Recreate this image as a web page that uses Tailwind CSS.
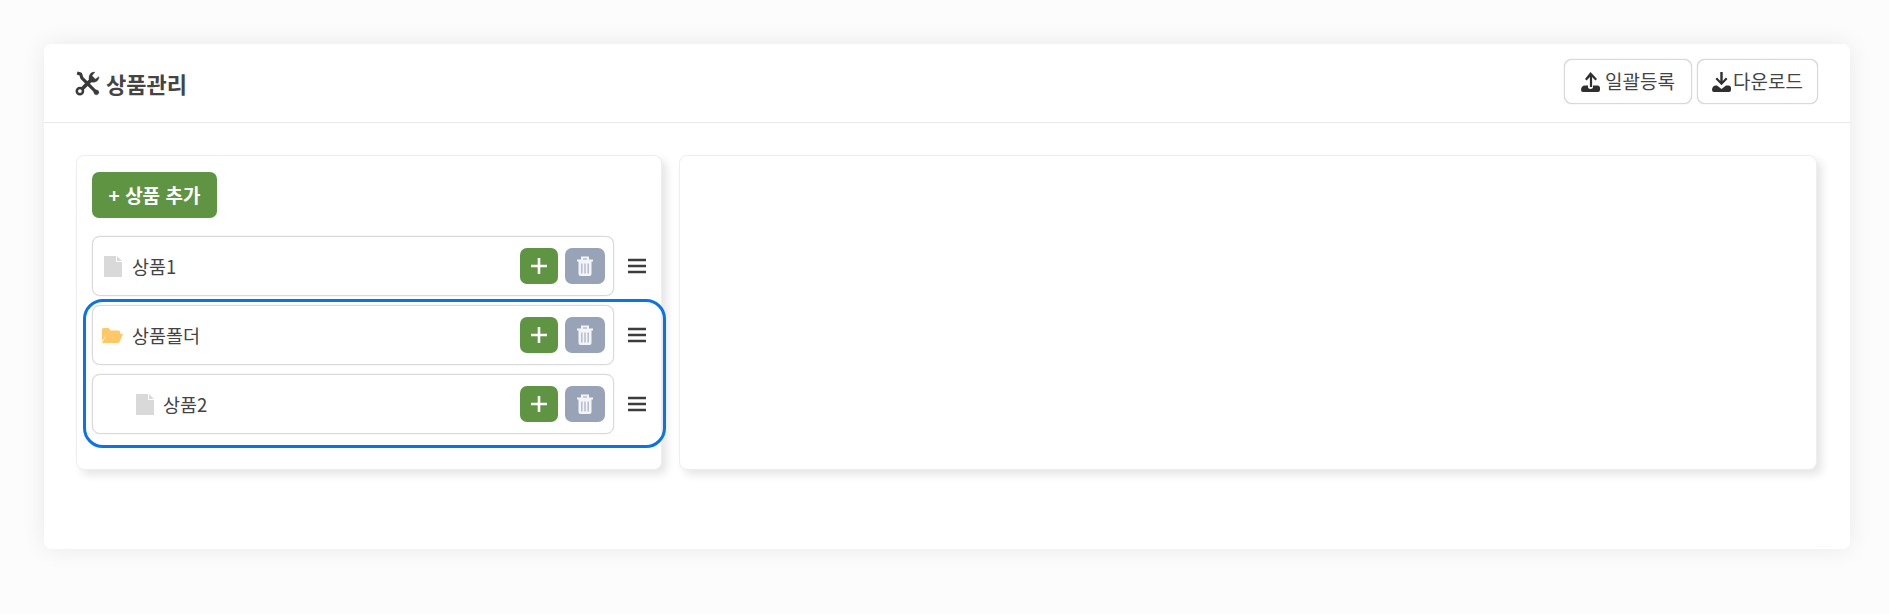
<!DOCTYPE html>
<html lang="ko">
  <head>
    <meta charset="UTF-8" />
    <title>상품관리</title>
    <script src="https://cdn.jsdelivr.net/npm/@tailwindcss/browser@4"></script>
  </head>
  <body class="bg-[#fcfcfc] h-screen pl-[44px] pr-[39px] pt-[44px] font-['Noto_Sans_CJK_KR','Noto_Sans',sans-serif] text-[#444]">
    <div class="bg-white h-[505px] rounded-[7px] shadow-[0_0_24px_rgba(0,0,0,0.08)]">
      <!-- header -->
      <header class="flex items-center justify-between h-[79px] pl-[31px] pr-[32px] border-b border-[#e9e9e9]">
        <div class="flex items-center gap-[6px]">
          <svg class="w-[25px] h-[25px]" viewBox="0 0 24 24" fill="none" stroke="#3a3a3a">
            <path d="M2 2l3.500 1 1 3.500L20.500 20.500" stroke-width="3" stroke-linejoin="round"/>
            <path d="M6.500 17.500L16 8" stroke-width="3.600"/>
            <path d="M23 5.500a5.300 5.300 0 0 1-8 4.500 5.300 5.300 0 0 1 4-9L16.300 4.500l3.200 3.300z" fill="#3a3a3a" stroke-width="0.500" stroke-linejoin="round"/>
            <circle cx="4.700" cy="19.300" r="3" fill="#fff" stroke-width="2.400"/>
            <circle cx="20.500" cy="20.500" r="2.300" fill="#3a3a3a" stroke-width="0.500"/>
          </svg>
          <h1 class="text-[22px] font-bold leading-none">상품관리</h1>
        </div>
        <div class="flex gap-[5px] mb-[3px]">
          <button class="flex items-center justify-center gap-[5px] w-[128px] h-[45px] bg-white border border-[#d9d9d9] shadow-[0_0_1px_#bbb] rounded-[8px] text-[19px]">
            <svg class="w-[19px] h-[20px]" viewBox="0 0 19 20" fill="#2f2f2f"><path d="M9.500 0l6.500 7-1.600 1.400-3.300-3.500V15H8.900V4.900L5.600 8.400 4 7z"/><path d="M0 18c0-2.500 1.500-4.500 4-4.500h3V15c0 1.300 1 2 2.500 2s2.500-.7 2.500-2v-1.500h4.500c1.500 0 2.500 1 2.500 2.500v2a2 2 0 0 1-2 2H2a2 2 0 0 1-2-2z"/></svg>
            일괄등록
          </button>
          <button class="flex items-center justify-center gap-[2px] w-[121px] h-[45px] bg-white border border-[#d9d9d9] shadow-[0_0_1px_#bbb] rounded-[8px] text-[19px]">
            <svg class="w-[19px] h-[20px]" viewBox="0 0 19 20" fill="#2f2f2f"><path d="M8.300 0h2.400v9l3.200-3.400 1.600 1.400-6 6.300-6-6.300 1.600-1.400 3.200 3.400z"/><path d="M0 18c0-2.500 1.500-4.500 4-4.500h1l4.500 3.500 4.500-3.500h2.500c1.500 0 2.500 1 2.500 2.500v2a2 2 0 0 1-2 2H2a2 2 0 0 1-2-2z"/></svg>
            다운로드
          </button>
        </div>
      </header>

      <div class="flex gap-[17px] pt-[32px] pl-[32px] pr-[33px]">
        <!-- tree -->
        <div class="w-[586px] h-[315px] p-[15px] pt-[16px] bg-white border border-[#eee] rounded-[8px] shadow-[5px_5px_8px_rgba(0,0,0,0.1)]">
          <button class="block w-[125px] h-[46px] bg-[#5f9442] text-white text-[19px] font-bold rounded-[7px]">+ 상품 추가</button>

          <div class="relative mt-[18px] flex flex-col gap-[9px]">
            <div class="flex items-center">
              <div class="flex items-center w-[522px] h-[60px] pl-[11px] pr-[8px] border border-[#d9d9d9] shadow-[0_0_1px_#bbb] rounded-[8px]">
                <svg class="w-[18px] h-[21px] mr-[10px]" viewBox="0 0 18 21" fill="#d9d9d9"><path d="M0 0h12v6h6v15H0z"/><path d="M13 0l5 5h-5z"/></svg>
                <span class="pt-[2px] text-[18.5px]">상품1</span>
                <button class="flex items-center justify-center w-[38px] h-[36px] ml-auto bg-[#5f9442] rounded-[7px]">
                  <svg class="w-[16px] h-[16px]" viewBox="0 0 16 16" stroke="#fff" stroke-width="2.600"><path d="M8 0v16M0 8h16"/></svg>
                </button>
                <button class="flex items-center justify-center w-[40px] h-[36px] ml-[7px] bg-[#98a3b8] rounded-[7px]">
                  <svg class="w-[18px] h-[20px]" viewBox="0 0 18 20"><path d="M1 4.500h16M6 4V1.500h6V4" fill="none" stroke="#f4f5f8" stroke-width="2"/><path d="M2.500 5h13v13a2 2 0 0 1-2 2h-9a2 2 0 0 1-2-2z" fill="#f4f5f8"/><path d="M5.800 7.500v10M9 7.500v10M12.200 7.500v10" stroke="#b4bccd" stroke-width="1.500"/></svg>
                </button>
              </div>
              <svg class="w-[18px] h-[16px] ml-[14px]" viewBox="0 0 18 16" stroke="#3d3d3d" stroke-width="2.500"><path d="M0 2h18M0 8h18M0 14h18"/></svg>
            </div>

            <div class="flex items-center">
              <div class="flex items-center w-[522px] h-[60px] pl-[9px] pr-[8px] border border-[#d9d9d9] shadow-[0_0_1px_#bbb] rounded-[8px]">
                <svg class="w-[21px] h-[15px] mr-[9px]" viewBox="0 0 21 15" fill="#ffc766"><path d="M0 1.500A1.500 1.500 0 0 1 1.500 0h5l2 2.500h8A1.500 1.500 0 0 1 18 4v2H5L0 13z"/><path d="M5 5.800H21l-3.500 8.200a1.500 1.500 0 0 1-1.300 1H0z"/></svg>
                <span class="pt-[2px] text-[18.5px]">상품폴더</span>
                <button class="flex items-center justify-center w-[38px] h-[36px] ml-auto bg-[#5f9442] rounded-[7px]">
                  <svg class="w-[16px] h-[16px]" viewBox="0 0 16 16" stroke="#fff" stroke-width="2.600"><path d="M8 0v16M0 8h16"/></svg>
                </button>
                <button class="flex items-center justify-center w-[40px] h-[36px] ml-[7px] bg-[#98a3b8] rounded-[7px]">
                  <svg class="w-[18px] h-[20px]" viewBox="0 0 18 20"><path d="M1 4.500h16M6 4V1.500h6V4" fill="none" stroke="#f4f5f8" stroke-width="2"/><path d="M2.500 5h13v13a2 2 0 0 1-2 2h-9a2 2 0 0 1-2-2z" fill="#f4f5f8"/><path d="M5.800 7.500v10M9 7.500v10M12.200 7.500v10" stroke="#b4bccd" stroke-width="1.500"/></svg>
                </button>
              </div>
              <svg class="w-[18px] h-[16px] ml-[14px]" viewBox="0 0 18 16" stroke="#3d3d3d" stroke-width="2.500"><path d="M0 2h18M0 8h18M0 14h18"/></svg>
            </div>

            <div class="flex items-center">
              <div class="flex items-center w-[522px] h-[60px] pl-[43px] pr-[8px] border border-[#d9d9d9] shadow-[0_0_1px_#bbb] rounded-[8px]">
                <svg class="w-[18px] h-[21px] mr-[9px]" viewBox="0 0 18 21" fill="#d9d9d9"><path d="M0 0h12v6h6v15H0z"/><path d="M13 0l5 5h-5z"/></svg>
                <span class="pt-[2px] text-[18.5px]">상품2</span>
                <button class="flex items-center justify-center w-[38px] h-[36px] ml-auto bg-[#5f9442] rounded-[7px]">
                  <svg class="w-[16px] h-[16px]" viewBox="0 0 16 16" stroke="#fff" stroke-width="2.600"><path d="M8 0v16M0 8h16"/></svg>
                </button>
                <button class="flex items-center justify-center w-[40px] h-[36px] ml-[7px] bg-[#98a3b8] rounded-[7px]">
                  <svg class="w-[18px] h-[20px]" viewBox="0 0 18 20"><path d="M1 4.500h16M6 4V1.500h6V4" fill="none" stroke="#f4f5f8" stroke-width="2"/><path d="M2.500 5h13v13a2 2 0 0 1-2 2h-9a2 2 0 0 1-2-2z" fill="#f4f5f8"/><path d="M5.800 7.500v10M9 7.500v10M12.200 7.500v10" stroke="#b4bccd" stroke-width="1.500"/></svg>
                </button>
              </div>
              <svg class="w-[18px] h-[16px] ml-[14px]" viewBox="0 0 18 16" stroke="#3d3d3d" stroke-width="2.500"><path d="M0 2h18M0 8h18M0 14h18"/></svg>
            </div>

            <!-- highlight round the folder -->
            <div class="absolute left-[-9px] top-[63px] w-[583px] h-[149px] border-[3px] border-[#0a74e4] rounded-[20px]"></div>
          </div>
        </div>

        <!-- detail -->
        <div class="flex-1 h-[315px] bg-white border border-[#eee] rounded-[8px] shadow-[5px_5px_8px_rgba(0,0,0,0.1)]"></div>
      </div>
    </div>
  </body>
</html>
